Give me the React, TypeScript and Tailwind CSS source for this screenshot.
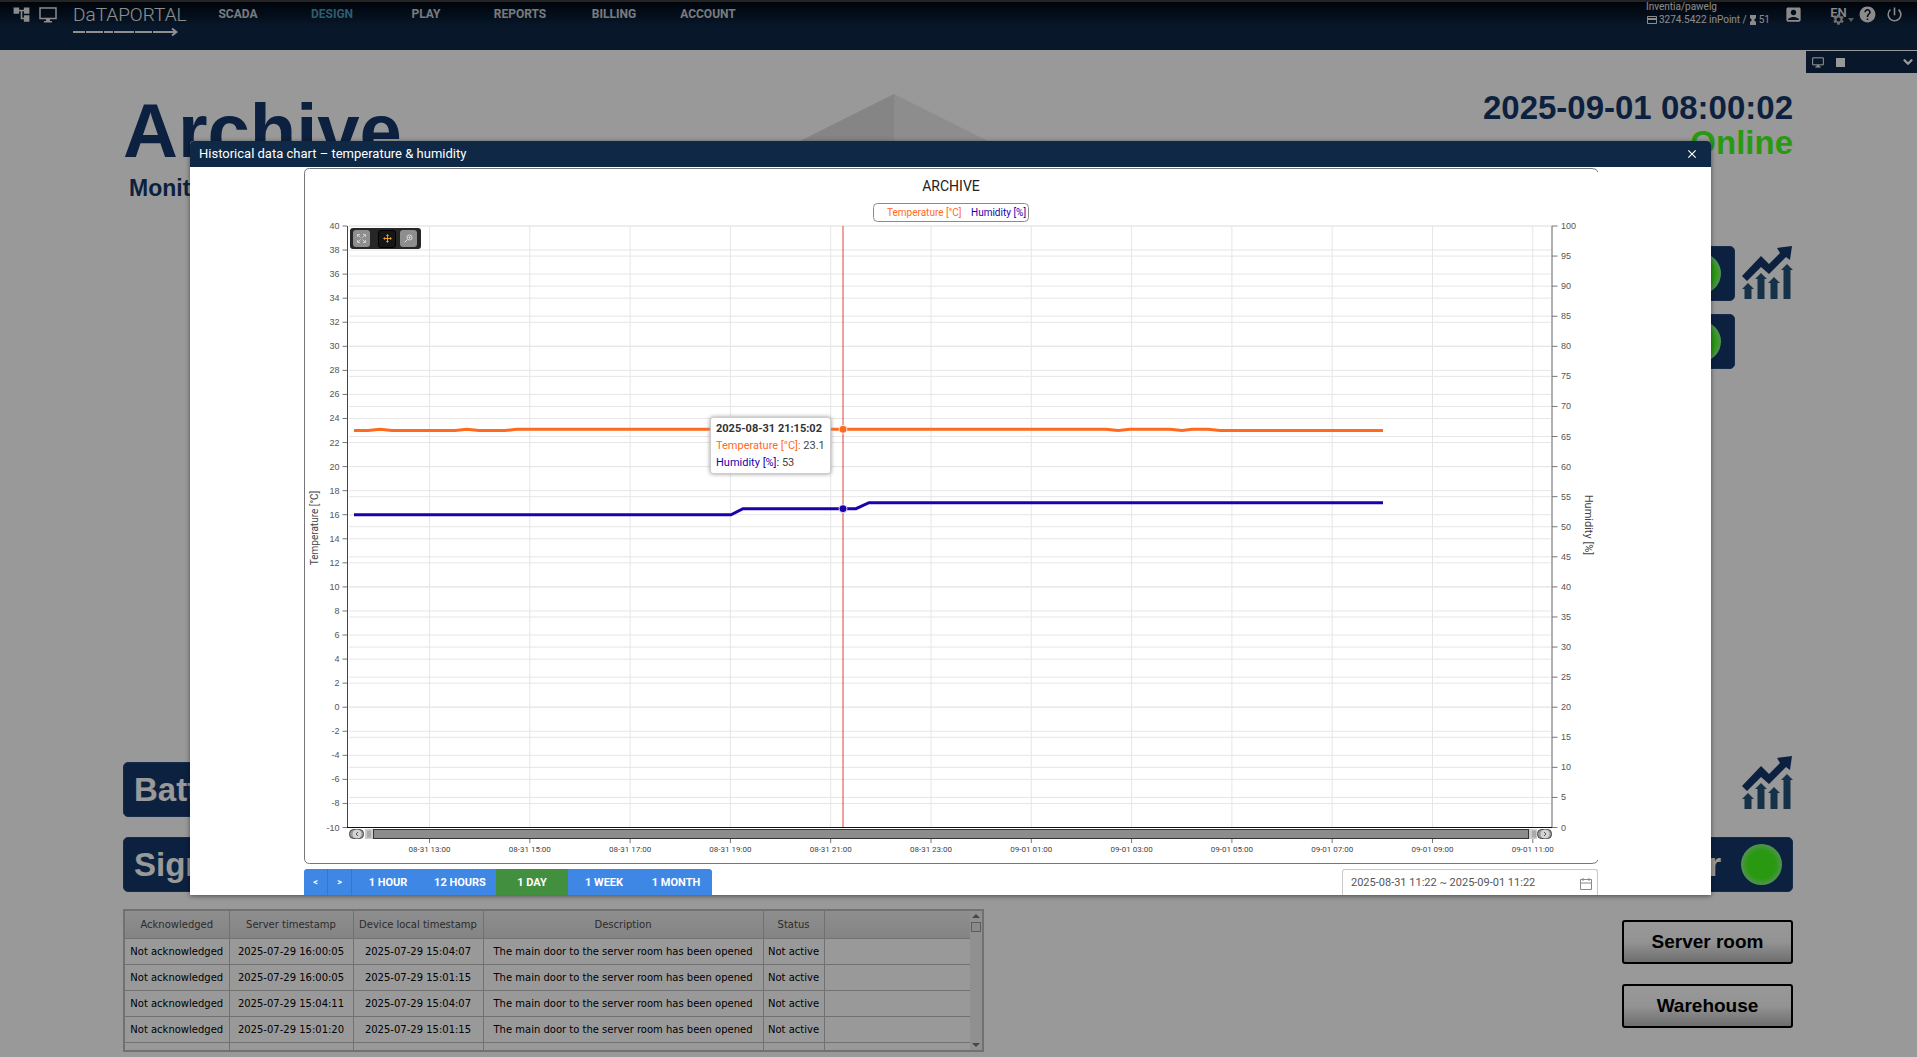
import { useState } from 'react';
import { ChevronDown } from 'lucide-react';
import {
  MdAccountTree,
  MdCreditCard,
  MdHelp,
  MdHourglassFull,
  MdPowerSettingsNew,
  MdAccountBox,
  MdSettings,
  MdClose,
} from 'react-icons/md';

const NAV_ITEMS = ['SCADA', 'DESIGN', 'PLAY', 'REPORTS', 'BILLING', 'ACCOUNT'];

const RANGES = ['1 HOUR', '12 HOURS', '1 DAY', '1 WEEK', '1 MONTH'];

const EVENT_TEXT = 'The main door to the server room has been opened';

const EVENTS = [
  { server: '2025-07-29 16:00:05', device: '2025-07-29 15:04:07' },
  { server: '2025-07-29 16:00:05', device: '2025-07-29 15:01:15' },
  { server: '2025-07-29 15:04:11', device: '2025-07-29 15:04:07' },
  { server: '2025-07-29 15:01:20', device: '2025-07-29 15:01:15' },
];

const TIME_LABELS = [
  '08-31 13:00',
  '08-31 15:00',
  '08-31 17:00',
  '08-31 19:00',
  '08-31 21:00',
  '08-31 23:00',
  '09-01 01:00',
  '09-01 03:00',
  '09-01 05:00',
  '09-01 07:00',
  '09-01 09:00',
  '09-01 11:00',
];

// Plot area inside the chart's viewBox
const PLOT = { left: 44, right: 1248, top: 58, bottom: 659.5 };
const PLOT_HEIGHT = PLOT.bottom - PLOT.top;

const tempY = (value: number) => PLOT.top + ((40 - value) / 50) * PLOT_HEIGHT;
const humidityY = (value: number) => PLOT.top + ((100 - value) / 100) * PLOT_HEIGHT;
const timeX = (index: number) => 125.5 + index * 100.3;

const TEMP_TICKS = Array.from({ length: 26 }, (_, i) => 40 - i * 2);
const HUMIDITY_TICKS = Array.from({ length: 21 }, (_, i) => 100 - i * 5);

const TEMPERATURE: [number, number][] = [
  [50, 23], [64, 23], [76, 23.1], [88, 23], [151, 23], [163, 23.1], [175, 23], [201, 23], [213, 23.1],
  [802, 23.1], [814, 23], [826, 23.1], [866, 23.1], [878, 23], [888, 23.1], [904, 23.1], [916, 23], [1079, 23],
];

const HUMIDITY: [number, number][] = [
  [50, 52], [427, 52], [439, 53], [552, 53], [565, 54], [1079, 54],
];

const toPoints = (series: [number, number][], scale: (v: number) => number) =>
  series.map(([x, v]) => `${x},${scale(v)}`).join(' ');

function MonitorIcon({ className }: { className: string }) {
  return (
    <svg viewBox="0 0 18 16" className={className} fill="none" aria-hidden="true">
      <path d="M1 1H17V11.500H1z" stroke="currentColor" strokeWidth="1.500" />
      <path d="M7 12H11V14H13V15.500H5V14H7z" fill="currentColor" />
    </svg>
  );
}

function TrendIcon() {
  return (
    <svg viewBox="0 0 51 54" className="h-[54px] w-[51px]" aria-hidden="true">
      <path d="M0 30 19 10 27 18 38 7 35 2 50 0 48 14 44 11 27 28 19 21 5 35z" fill="#14386a" />
      <g fill="#245479">
        <path d="M6 37l6 6H9.500v10h-7V43H0z" />
        <path d="M19 27l6 6h-2.500v20h-7V33H13z" />
        <path d="M32 31l6 6h-2.500v16h-7V37H26z" />
        <path d="M45 18l6 6h-2.500v29h-7V24H39z" />
      </g>
    </svg>
  );
}

function StatusCard({ label, lamp, className }: { label?: string; lamp?: boolean; className: string }) {
  return (
    <div
      className={`flex h-[55px] items-center justify-between rounded-[5px] border border-[#24487a] bg-[#14386a] px-[10px] text-[33px] font-bold text-white ${className}`}
    >
      <span>{label}</span>
      {lamp && (
        <span className="h-[41px] w-[41px] rounded-full bg-[radial-gradient(circle,#46ff1e_48%,#8cf58c_72%)]" />
      )}
    </div>
  );
}

function Logo() {
  return (
    <a href="#home" aria-label="DataPortal" className="flex w-[105px] flex-col text-[#eeeeee]">
      <span className="font-[Roboto,sans-serif] text-[19px] leading-[26px] font-light">DaTAPORTAL</span>
      <svg viewBox="0 0 105 8" className="h-2 w-[105px]" fill="none" stroke="currentColor" strokeWidth="2">
        <path d="M0 4H102" strokeDasharray="12 1 17 1 9 1 20 1 17 1 40" />
        <path d="M99 .5 103.500 4 99 7.500" />
      </svg>
    </a>
  );
}

function TopBar() {
  return (
    <header className="flex h-[50px] items-start border-t-2 border-[#3c3c3c] bg-linear-to-b from-[#020812] via-[#0e2746] via-50% to-[#0e2746] font-[Roboto,sans-serif]">
      <div className="flex w-[191px] shrink-0 items-start pl-[12px] text-[#e8e8e8]">
        <button aria-label="Tree" className="mt-[3px]">
          <MdAccountTree size={19} />
        </button>
        <button aria-label="Screens" className="mt-[5px] mr-4 ml-2">
          <MonitorIcon className="h-4 w-[18px]" />
        </button>
        <Logo />
      </div>
      <nav className="flex">
        {NAV_ITEMS.map((item) => (
          <a
            key={item}
            href={`#${item.toLowerCase()}`}
            className={`w-[94px] text-center text-xs leading-6 font-bold ${
              item === 'DESIGN' ? 'text-[#4b9ab8]' : 'text-[#c9cdd2]'
            }`}
          >
            {item}
          </a>
        ))}
      </nav>
      <div className="ml-auto flex items-start pr-[13px] text-[#e8e8e8]">
        <div className="mr-[14px] text-[10px] leading-[13px]">
          <div className="-mt-[2px]">Inventia/pawelg</div>
          <div className="flex items-center">
            <MdCreditCard size={12} className="mr-px" />
            3274.5422 inPoint /
            <MdHourglassFull size={12} />
            51
          </div>
        </div>
        <button aria-label="Profile" className="mt-[3px] mr-[27px]">
          <MdAccountBox size={19} />
        </button>
        <button aria-label="Language" className="relative mr-[11px] w-[17px] text-[13px] leading-[22px] font-medium">
          EN
          <MdSettings size={13} className="absolute top-[11px] left-[2px] text-[#b8b8b8]" />
          <span className="absolute top-[16px] -right-[7px] border-x-3 border-t-4 border-x-transparent border-t-[#999999]" />
        </button>
        <button aria-label="Help" className="mt-[3px] mr-[8px]">
          <MdHelp size={19} />
        </button>
        <button aria-label="Log out" className="mt-[3px]">
          <MdPowerSettingsNew size={19} />
        </button>
      </div>
    </header>
  );
}

function EventTable() {
  const head = 'border border-t-0 border-[#bcbcbc] p-0 font-normal whitespace-nowrap';
  const cell = 'h-[26px] border border-[#bcbcbc] p-0 text-center whitespace-nowrap';
  return (
    <div className="flex w-[861px] border-2 border-[#bcbcbc] font-['DejaVu_Sans',sans-serif] text-[10px]">
      <table className="w-full table-fixed border-collapse">
        <thead>
          <tr className="h-[27px] bg-linear-to-b from-[#eeeeee] to-[#dcdcdc] text-[#4a4a4a]">
            <th className={`${head} w-[104px] border-l-0`}>Acknowledged</th>
            <th className={`${head} w-[124px]`}>Server timestamp</th>
            <th className={`${head} w-[130px]`}>Device local timestamp</th>
            <th className={`${head} w-[280px]`}>Description</th>
            <th className={`${head} w-[61px]`}>Status</th>
            <th className={`${head} border-r-0`} />
          </tr>
        </thead>
        <tbody>
          {EVENTS.map((event, i) => (
            <tr key={i}>
              <td className={`${cell} border-l-0`}>Not acknowledged</td>
              <td className={cell}>{event.server}</td>
              <td className={cell}>{event.device}</td>
              <td className={cell}>{EVENT_TEXT}</td>
              <td className={cell}>Not active</td>
              <td className={`${cell} border-r-0`} />
            </tr>
          ))}
          <tr>
            {[0, 1, 2, 3, 4, 5].map((i) => (
              <td key={i} className="h-[8px] border border-x-[#bcbcbc] border-y-0 p-0 first:border-l-0 last:border-r-0" />
            ))}
          </tr>
        </tbody>
      </table>
      <div className="flex w-[12px] shrink-0 flex-col items-center bg-[#f0f0f0] py-[3px]">
        <span className="border-x-4 border-b-4 border-x-transparent border-b-[#777777]" />
        <span className="mt-1 h-[10px] w-[10px] border border-[#999999] bg-[#e6e6e6]" />
        <span className="mt-auto border-x-4 border-t-4 border-x-transparent border-t-[#777777]" />
      </div>
    </div>
  );
}

function Dashboard() {
  return (
    <>
      <div className="mt-px flex justify-end">
        <div className="flex h-[22px] w-[111px] items-center bg-[#0e2746] px-[6px] text-white">
          <MonitorIcon className="h-[11px] w-3" />
          <span className="ml-3 h-[9px] w-[9px] bg-white" />
          <ChevronDown size={14} strokeWidth={4} className="ml-auto -mr-1" />
        </div>
      </div>

      {/* Backdrop shape */}
      <svg viewBox="0 0 200 100" className="absolute top-[94px] left-[794px] h-[100px] w-[200px]" aria-hidden="true">
        <path d="M100 0 0 50V100H100z" fill="#dedede" />
        <path d="M100 0 200 50V100H100z" fill="#ececec" />
      </svg>

      <main className="relative flex flex-col pr-[124px] pl-[123px] font-['Liberation_Sans',sans-serif]">
        <div className="flex h-[173px] justify-between text-[#14386a]">
          <div className="pt-[20px]">
            <h1 className="text-[76px] leading-[75px] font-bold">Archive</h1>
            <p className="mt-[6px] pl-[6px] text-[23px] leading-7 font-bold">Monitoring</p>
          </div>
          <div className="pt-[17px] text-right text-[33px] leading-[35px] font-bold">
            <div>2025-09-01 08:00:02</div>
            <div className="text-[#46ff1e]">Online</div>
          </div>
        </div>

        <div className="flex items-start justify-end gap-[7px]">
          <StatusCard lamp className="w-[280px] pr-[13px]" />
          <TrendIcon />
        </div>
        <div className="mt-[13px] flex justify-end pr-[58px]">
          <StatusCard lamp className="w-[280px] pr-[13px]" />
        </div>

        <div className="mt-[387px] flex justify-between">
          <StatusCard label="Battery" className="mt-[6px] w-[400px]" />
          <TrendIcon />
        </div>
        <div className="mt-[20px] flex justify-between">
          <StatusCard label="Signal" className="w-[400px]" />
          <StatusCard label="Power" lamp className="w-[182px]" />
        </div>

        <div className="mt-[17px] flex items-start justify-between">
          <EventTable />
          <div className="mt-[11px] flex flex-col gap-5">
            {['Server room', 'Warehouse'].map((name) => (
              <button
                key={name}
                className="h-11 w-[171px] rounded-[3px] border-2 border-black bg-linear-to-b from-white via-[#f5f5f5] to-[#b8b8b8] text-[19px] font-bold"
              >
                {name}
              </button>
            ))}
          </div>
        </div>
      </main>
    </>
  );
}

function HistoryChart() {
  return (
    <div className="relative font-[Roboto,sans-serif]">
      <svg viewBox="0 0 1294 696" className="block w-full">
        <path
          d="M1294 4Q1293 .5 1288 .5H5.500Q.5.5.5 5.500V690Q.5 695.500 5.500 695.500H1288Q1293 695.500 1294 692"
          fill="none"
          stroke="#75757a"
        />
        <text x="647" y="23" fontSize="14" textAnchor="middle" fill="#222222">ARCHIVE</text>
        <rect x="569.500" y="35.500" width="155" height="18" rx="4" fill="none" stroke="#8a8a8a" />
        <text x="583" y="48" fontSize="10" fill="#ff6a1f">Temperature [°C]</text>
        <text x="667" y="48" fontSize="10" fill="#1c00b0">Humidity [%]</text>

        {/* Grid */}
        {TEMP_TICKS.map((v) => (
          <line key={v} x1="45" x2="1248" y1={tempY(v)} y2={tempY(v)} stroke="#e6e6e6" />
        ))}
        {HUMIDITY_TICKS.map((v) => (
          <line key={v} x1="45" x2="1248" y1={humidityY(v)} y2={humidityY(v)} stroke="#e6e6e6" />
        ))}
        {TIME_LABELS.map((label, i) => (
          <line key={label} x1={timeX(i)} x2={timeX(i)} y1="58" y2="659" stroke="#e6e6e6" />
        ))}

        {/* Axes */}
        <path d="M43.500 58V660" stroke="#444444" />
        <path d="M1248 58V660" stroke="#b0b0b0" strokeWidth="2" />
        <path d="M43 659.500H1248" stroke="#111111" />
        <g fontSize="9" fill="#555555" className="font-['Liberation_Sans',sans-serif]">
          {TEMP_TICKS.map((v) => (
            <g key={v}>
              <line x1="38.500" x2="43" y1={tempY(v)} y2={tempY(v)} stroke="#777777" />
              <text x="35.500" y={tempY(v) + 3} textAnchor="end">{v}</text>
            </g>
          ))}
          {HUMIDITY_TICKS.map((v) => (
            <g key={v}>
              <line x1="1248" x2="1253.500" y1={humidityY(v)} y2={humidityY(v)} stroke="#777777" />
              <text x="1257" y={humidityY(v) + 3}>{v}</text>
            </g>
          ))}
        </g>
        <g fontSize="8" fill="#444444">
          {TIME_LABELS.map((label, i) => (
            <g key={label}>
              <line x1={timeX(i)} x2={timeX(i)} y1="671" y2="675" stroke="#777777" />
              <text x={timeX(i)} y="684" textAnchor="middle">{label}</text>
            </g>
          ))}
        </g>
        <text transform="translate(14 360) rotate(-90)" fontSize="10" textAnchor="middle" fill="#444444">
          Temperature [°C]
        </text>
        <text transform="translate(1281 357) rotate(90)" fontSize="11" textAnchor="middle" fill="#444444">
          Humidity [%]
        </text>

        {/* Scroll bar under the plot */}
        <rect x="69.500" y="661.500" width="1155" height="9" fill="#8c8c8c" stroke="#333333" />
        <rect x="45.500" y="661.500" width="14" height="9" rx="4" fill="#999999" stroke="#444444" />
        <rect x="1233.500" y="661.500" width="14" height="9" rx="4" fill="#999999" stroke="#444444" />
        <circle cx="53" cy="666" r="4.500" fill="#d4d4d4" />
        <circle cx="1241" cy="666" r="4.500" fill="#d4d4d4" />
        <path d="M54 664 52 666 54 668M1240 664 1242 666 1240 668" fill="none" stroke="#555555" />
        <rect x="61" y="661" width="8" height="10" fill="#cccccc" />
        <rect x="1225" y="661" width="8" height="10" fill="#cccccc" />
        <path d="M64 662.500V669.500M66 662.500V669.500M1229 662.500V669.500M1231 662.500V669.500" stroke="#888888" />

        {/* Series */}
        <path d="M539 58V659" stroke="#d9302a" strokeOpacity="0.45" strokeWidth="2" />
        <polyline points={toPoints(TEMPERATURE, tempY)} fill="none" stroke="#ff6a1f" strokeWidth="3" />
        <polyline points={toPoints(HUMIDITY, humidityY)} fill="none" stroke="#1c00b0" strokeWidth="3" />
        <circle cx="539" cy={tempY(23.1)} r="4" fill="#ff6a1f" stroke="white" strokeWidth="0.800" />
        <circle cx="539" cy={humidityY(53)} r="4" fill="#1c00b0" stroke="white" strokeWidth="0.800" />
      </svg>

      <div className="absolute top-[60px] left-[46px] flex h-[21px] w-[71px] items-center rounded-[3px] bg-[#262626] pl-[3px]">
        <button aria-label="Fit" className="flex h-[17px] w-[17px] items-center justify-center rounded-[3px] bg-[#8e8e8e]">
          <svg viewBox="0 0 9 9" className="h-[9px] w-[9px]" fill="none" stroke="#cfcfcf">
            <path d="M.5 3V.5H3M6 .5H8.500V3M8.500 6V8.500H6M3 8.500H.5V6M1 1 3.500 3.500M8 1 5.500 3.500M1 8 3.500 5.500M8 8 5.500 5.500" />
          </svg>
        </button>
        <button aria-label="Pan" className="ml-2 flex h-[18px] w-[18px] items-center justify-center rounded-[3px] border border-black bg-[#161616]">
          <svg viewBox="0 0 9 9" className="h-[9px] w-[9px]" fill="#f0a020">
            <path d="M4 2H3L4.500 0 6 2H5V4H7V3L9 4.500 7 6V5H5V7H6L4.500 9 3 7H4V5H2V6L0 4.500 2 3V4H4z" />
          </svg>
        </button>
        <button aria-label="Zoom" className="ml-1 flex h-[17px] w-[17px] items-center justify-center rounded-[3px] bg-[#8e8e8e]">
          <svg viewBox="0 0 9 9" className="h-[9px] w-[9px]" fill="none" stroke="#dddddd">
            <circle cx="5.500" cy="3.500" r="2.500" />
            <path d="M3.500 5.500.5 8.500M4.500 3.500H6.500M5.500 2.500V4.500" />
          </svg>
        </button>
      </div>

      <div className="absolute top-[249px] left-[406px] rounded-[3px] border border-[#cccccc] bg-white px-[5px] py-[2px] text-[11px] leading-[17px] whitespace-nowrap text-[#444444] shadow-[0_0_4px_#999999]">
        <div className="font-bold text-[#333333]">2025-08-31 21:15:02</div>
        <div><span className="text-[#ff6a1f]">Temperature [°C]:</span> 23.1</div>
        <div><span className="text-[#1c00b0]">Humidity [%]:</span> 53</div>
      </div>
    </div>
  );
}

function HistoryDialog({ onClose }: { onClose: () => void }) {
  const [range, setRange] = useState('1 DAY');
  const [period, setPeriod] = useState('2025-08-31 11:22 ~ 2025-09-01 11:22');

  return (
    <div className="absolute inset-0 bg-black/40 pt-[141px] pr-[206px] pl-[190px]">
      <div
        role="dialog"
        aria-labelledby="history-title"
        className="overflow-hidden rounded-t-[4px] bg-white font-[Roboto,sans-serif] shadow-[0_1px_5px_rgba(0,0,0,0.5)]"
      >
        <div className="flex h-[26px] items-center justify-between bg-[#0e2845] pr-[12px] pl-[9px] text-white">
          <h2 id="history-title" className="text-[13px]">
            Historical data chart – temperature &amp; humidity
          </h2>
          <button aria-label="Close" onClick={onClose}>
            <MdClose size={14} />
          </button>
        </div>
        <div className="pt-px pr-[113px] pl-[114px]">
          <HistoryChart />
          <div className="mt-[5px] flex justify-between">
            <div className="flex h-[26px] overflow-hidden rounded-t-[3px] bg-[#3f87e5] text-[11px] font-bold text-white">
              <button aria-label="Previous" className="w-6 border-r border-[#3676cc] pt-[2px] text-[9px]">&lt;</button>
              <button aria-label="Next" className="w-6 border-r border-[#3676cc] pt-[2px] text-[9px]">&gt;</button>
              {RANGES.map((item) => (
                <button
                  key={item}
                  onClick={() => setRange(item)}
                  className={`w-[72px] pt-[2px] whitespace-nowrap ${item === range ? 'bg-[#438f40]' : ''}`}
                >
                  {item}
                </button>
              ))}
            </div>
            <label className="flex h-[26px] w-[256px] items-center rounded-t-[3px] border border-b-0 border-[#c8c8c8] pt-[2px] pr-[5px] pl-2">
              <input
                aria-label="Period"
                value={period}
                onChange={(e) => setPeriod(e.target.value)}
                className="min-w-0 flex-1 text-[11px] text-[#555555] outline-none"
              />
              <svg viewBox="0 0 12 12" className="h-3 w-3" fill="none" stroke="#888888">
                <path d="M.5 1.500H11.500V11.500H.5zM.5 5H11.500M3 0V3M9 0V3" />
              </svg>
            </label>
          </div>
        </div>
      </div>
    </div>
  );
}

function App() {
  const [isHistoryOpen, setIsHistoryOpen] = useState(true);

  return (
    <div className="relative min-h-screen overflow-hidden bg-white">
      <TopBar />
      <Dashboard />
      {isHistoryOpen && <HistoryDialog onClose={() => setIsHistoryOpen(false)} />}
    </div>
  );
}

export default App;
